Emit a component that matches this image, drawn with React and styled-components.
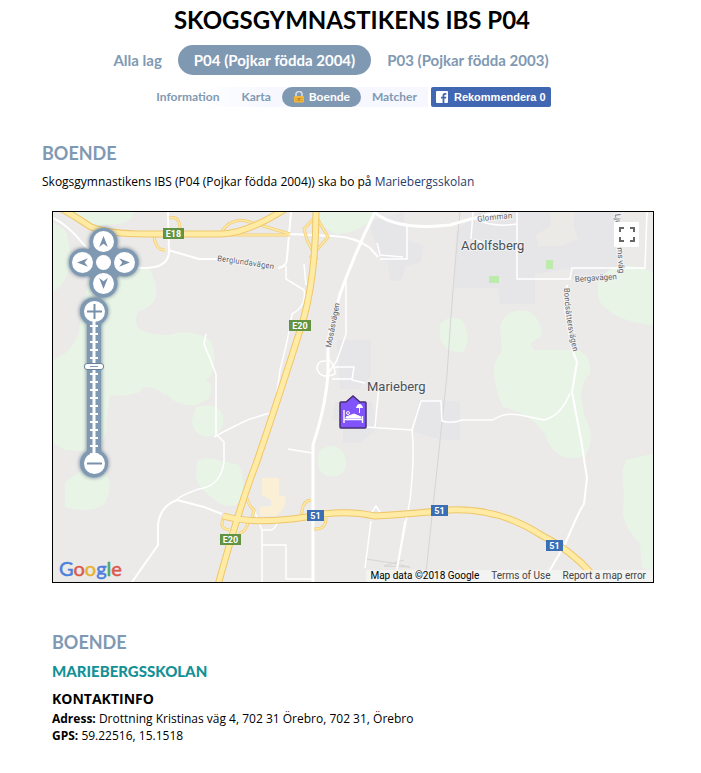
import React, { useState } from "react";
import styled, { createGlobalStyle } from "styled-components";

const slate = "#8099b3";

const GlobalStyle = createGlobalStyle`
  * { box-sizing: border-box; }
  body {
    margin: 0;
    background: #fff;
    color: #000;
    font-family: "Open Sans", sans-serif;
    font-size: 12px;
    line-height: 17px;
  }
`;

const Page = styled.main`
  padding: 4px 47px 24px 42px;
`;

const Title = styled.h1`
  margin: 0;
  padding-left: 8px;
  font: 700 24px/32px Lato, sans-serif;
  text-align: center;
  white-space: nowrap;
`;

const TeamNav = styled.nav`
  display: flex;
  justify-content: center;
  margin: 9px 34px 12px 0;
`;

const TeamTab = styled.a`
  padding: 0 16px;
  border-radius: 15px;
  background: ${(p) => (p.$active ? slate : "transparent")};
  color: ${(p) => (p.$active ? "#fff" : slate)};
  font: 700 15px/30px Lato, sans-serif;
  text-decoration: none;
  white-space: nowrap;
`;

const SubNav = styled.nav`
  display: flex;
  justify-content: center;
  margin-bottom: 35px;
`;

const SubItems = styled.div`
  display: flex;
  background: linear-gradient(90deg, #fff 20%, #f6f7ff 45%);
`;

const SubTab = styled.a`
  display: flex;
  align-items: center;
  gap: 4px;
  padding: 0 11px;
  border-radius: 10px;
  background: ${(p) => (p.$active ? slate : "transparent")};
  color: ${(p) => (p.$active ? "#fff" : slate)};
  font: 700 12px/20px Lato, sans-serif;
  text-decoration: none;
`;

const Recommend = styled.button`
  display: flex;
  align-items: center;
  gap: 6px;
  height: 20px;
  padding: 0 5px;
  margin-left: 3px;
  border: 0;
  border-radius: 2px;
  background: #4267b2;
  color: #fff;
  font: 700 11px/20px "Liberation Sans", sans-serif;
  white-space: nowrap;
`;

const Heading = styled.h2`
  margin: 0;
  color: ${slate};
  font: 700 18px/22px Lato, sans-serif;
`;

const Intro = styled.p`
  margin: 9px 0 21px;
`;

const TextLink = styled.a`
  color: #293c6b;
  text-decoration: none;
`;

const MapFrame = styled.section`
  position: relative;
  margin-left: 10px;
  border: 1px solid #000;
  overflow: hidden;
`;

const MapDrawing = styled.svg`
  display: block;
  width: 100%;
  height: auto;
  font-family: Roboto, sans-serif;
`;

const Controls = styled.div`
  position: absolute;
  top: 10px;
  left: 10px;
  width: 82px;
  display: flex;
  flex-direction: column;
`;

const ControlBacking = styled.svg`
  position: absolute;
  inset: 0;
`;

const PanPad = styled.div`
  position: relative;
  display: grid;
  grid-template-columns: repeat(3, 21px);
  grid-template-rows: repeat(3, 21px);
  margin: 9px 0 0 9px;
`;

const RoundButton = styled.button`
  display: flex;
  align-items: center;
  justify-content: center;
  grid-area: ${(p) => p.$area};
  place-self: center;
  width: ${(p) => p.$size || 21}px;
  height: ${(p) => p.$size || 21}px;
  padding: 0;
  border: 0;
  border-radius: 50%;
  background: #fff;
`;

const ZoomColumn = styled.div`
  position: relative;
  display: flex;
  flex-direction: column;
  align-items: center;
  width: 22px;
  margin: 7px 0 0 20px;
`;

const ZoomRange = styled.input`
  appearance: none;
  writing-mode: vertical-lr;
  direction: rtl;
  width: 20px;
  height: 131px;
  margin: 0;
  background: transparent;
  &::-webkit-slider-thumb {
    appearance: none;
    width: 20px;
    height: 7px;
    border: 1px solid #68819c;
    border-radius: 3px;
    background: linear-gradient(#fff 2px, ${slate} 2px, ${slate} 3px, #fff 3px) center / 8px 5px no-repeat #fff;
  }
`;

const FullscreenButton = styled.button`
  position: absolute;
  top: 10px;
  right: 14px;
  width: 25px;
  height: 25px;
  padding: 0;
  border: 0;
  border-radius: 1px;
  background: #fff;
`;

const GoogleLink = styled.a`
  position: absolute;
  left: 6px;
  bottom: 1px;
  font: 400 20px/26px Lato, sans-serif;
  text-decoration: none;
  -webkit-text-stroke: 0.5px currentColor;
`;

const Letter = styled.span`
  color: ${(p) => p.$color};
`;

const Credits = styled.footer`
  position: absolute;
  right: 0;
  bottom: 0;
  display: flex;
  gap: 12px;
  padding: 0 7px 0 4px;
  background: rgba(247, 247, 247, 0.7);
  color: #000;
  font: 400 10px/12px Roboto, sans-serif;
`;

const CreditLink = styled.a`
  color: #444;
  text-decoration: none;
`;

const Details = styled.section`
  padding: 48px 0 0 10px;
`;

const SchoolName = styled.h3`
  margin: 7px 0;
  color: #149196;
  font: 900 15px/22px Lato, sans-serif;
`;

const ContactHeading = styled.h4`
  margin: 0;
  font: 700 14px/20px "Open Sans", sans-serif;
  margin-bottom: 1px;
`;

const ContactLine = styled.p`
  margin: 0;
`;

function Lock() {
  return (
    <svg width="12" height="12" viewBox="0 0 12 12" aria-hidden="true">
      <path d="M3 6V3.5a3 2.7 0 0 1 6-.5v2" fill="none" stroke="#d9dde0" strokeWidth="1.6" />
      <rect x="1" y="5" width="10" height="6.5" rx="1" fill="#f3b83f" />
      <path d="M2 7.5h8M2 9.5h8" stroke="#dfa02c" />
      <path d="M6 7v2.5" stroke="#8c6418" />
    </svg>
  );
}

function FacebookMark() {
  return (
    <svg width="12" height="12" viewBox="0 0 12 12" aria-hidden="true">
      <rect width="12" height="12" rx="1" fill="#fff" />
      <path d="M6.6 12V7.5H5V5.8h1.6V4.5c0-1.6 1-2.4 2.4-2.4h1.3v1.6h-.9c-.8 0-1 .4-1 .9v1.2h1.9L10 7.5H8.4V12z" fill="#4267b2" />
    </svg>
  );
}

function Arrow({ turn }) {
  return (
    <svg width="13" height="13" viewBox="-6 -6 12 12" aria-hidden="true">
      <path d="M0-5L4 5L0 2L-4 5Z" fill="#7890aa" transform={`rotate(${turn})`} />
    </svg>
  );
}

function Sign({ plus }) {
  return (
    <svg width="15" height="15" viewBox="0 0 15 15" aria-hidden="true">
      <path d={plus ? "M0 7.5h15M7.5 0v15" : "M0 7.5h15"} stroke="#7890aa" strokeWidth="2" />
    </svg>
  );
}

const shields = [
  { x: 163, y: 228, w: 21, label: "E18", color: "#619342" },
  { x: 289, y: 320, w: 22, label: "E20", color: "#619342" },
  { x: 220, y: 534, w: 21, label: "E20", color: "#619342" },
  { x: 307, y: 510, w: 17, label: "51", color: "#3b6fb5" },
  { x: 431, y: 505, w: 17, label: "51", color: "#3b6fb5" },
  { x: 546, y: 540, w: 17, label: "51", color: "#3b6fb5" },
];

const woods = [
  "M53 292Q72 280 70 250L66 231L53 222Z",
  "M74 212H134Q131 222 119 224L96 226Z",
  "M53 360Q70 354 78 335Q84 302 88 282Q120 268 145 267Q157 274 156 297Q153 307 138 311Q133 326 141 330Q157 337 172 334Q193 329 211 341Q218 357 211 376Q198 386 178 382Q168 390 165 395Q145 380 140 392Q125 397 110 395L106 424Q110 440 90 452L65 450L53 443Z",
  "M164 392Q180 378 202 377Q216 384 209 398Q192 412 173 400Z",
  "M196 407Q218 401 223 416Q225 434 207 437Q192 434 192 420Z",
  "M197 461Q207 455 221 461L239 465Q248 486 238 504Q224 510 211 497Q195 485 196 474Z",
  "M65 482L82 470L105 471Q115 489 103 505Q88 514 65 507Z",
  "M319 451Q334 440 344 454Q350 471 337 476Q319 478 318 463Z",
  "M319 212H378Q366 231 337 234Q322 227 319 222Z",
  "M500 326Q506 308 528 311Q544 321 541 337Q525 343 534 350H576Q592 354 590 374Q575 385 586 420Q596 437 585 456Q555 465 545 434Q530 413 503 407Q494 388 494 367Q497 356 502 351Z",
  "M440 324Q451 314 461 320Q473 335 463 352Q446 354 440 338Z",
  "M598 284Q604 268 622 266Q640 264 653 273V325Q616 322 600 302Q597 294 598 284Z",
  "M626 460L653 454V570L642 568L640 544Q626 530 623 515L624 491Q620 476 626 460Z",
];

const minorRoads = [
  "M286 266V279L304 290Q307 306 292 314Q289 336 280 370L276 400",
  "M304 264L306 285M346 281V334L337 360L328 374",
  "M403 257L380 255L377 243M407 226V259H380",
  "M326 361Q317 360 317 369Q321 380 335 374Q336 367 327 357",
  "M334 367H354L352 380L365 383M332 379H352M350 426L412 430L421 401H441L442 421Q452 424 462 420Q483 420 493 420Q504 412 520 415L544 420Q561 416 570 393",
  "M379 386L375 427M412 430Q415 455 410 500L397 570",
  "M473 212L471 239M517 212V279H570L572 268H645L647 212",
  "M474 218Q491 228 517 224M474 239L490 246",
  "M288 449L312 453M206 334L204 344L216 374V436M214 437Q238 424 250 419L270 413",
  "M217 435L224 442V462Q221 486 199 489Q177 497 177 500",
  "M254 510L262 530H272Q278 526 278 518M262 530V582M262 545H286V579H312",
  "M371 521L365 568M405 521L397 568M372 512L376 506L381 514",
];

const ramps =
  "M169 218Q181 215 180 232M154 235Q155 250 165 250M222 231Q233 216 250 222L290 234M230 235H290M317 215L304 229L307 240L317 260M316 216L328 237L310 258M224 517Q218 528 229 530M248 520Q248 530 239 534M246 495Q248 505 254 510L252 518M302 516Q301 501 311 500M314 529Q326 530 326 518";

const highways = [
  "M62 209Q76 217 91 227Q110 234 145 234H221Q248 233 285 209",
  "M316 209Q316 275 303 321Q278 400 256 464Q240 505 218 585",
  "M223 516Q255 525 306 517Q343 509 375 516Q410 514 450 510Q500 508 541 535Q571 550 592 574",
];

function MapPicture() {
  return (
    <MapDrawing viewBox="53 212 600 370" role="img" aria-label="Map of Marieberg and Adolfsberg">
      <defs>
        <path id="berglund" d="M217 261Q242 264 278 270" />
        <path id="glomman" d="M478 222Q495 219 516 218" />
        <path id="bondsatter" d="M564 288Q565 320 574 354" />
      </defs>
      <rect x="53" y="212" width="600" height="370" fill="#ebeae8" />
      <g fill="#e6e6e9">
        <path d="M369 222L403 212L407 240L423 246L421 262L406 266L401 281H390L388 262L378 253Z" />
        <path d="M456 231L480 212H617V278H570V268L535 274V304H500L498 288H454Z" />
        <path d="M337 340H371V376L358 389H340ZM335 402H371L378 428L360 443H343V421L332 420ZM419 400L460 401V440H442L414 432Z" />
      </g>
      <g fill="#ebeae6">
        <path d="M536 235L551 226L550 212H574V226L578 239L561 246H538Z" />
        <path d="M382 400L400 403L398 414H385Z" />
      </g>
      <g fill="#e8f5e6">
        {woods.map((d) => <path key={d} d={d} />)}
      </g>
      <g fill="#bcebab">
        <rect x="546" y="260" width="7" height="9" />
        <rect x="489" y="276" width="10" height="7" />
      </g>
      <path d="M262 478H279V495L286 497L284 507L277 516H260V507L271 506V500L262 495Z" fill="#fbf0d6" />
      <g fill="none" stroke="#d5d5d5">
        <path d="M460 212Q453 280 447 375L425 582" />
        <path d="M366 559L392 563L410 567L384 566L404 560" />
      </g>
      <g fill="none" stroke="#fff" strokeWidth="1.5" strokeLinejoin="round">
        {minorRoads.map((d) => <path key={d} d={d} />)}
      </g>
      <g fill="none" stroke="#fff" strokeWidth="2" strokeLinejoin="round">
        <path d="M53 218Q68 225 84 245L104 261L141 268Q168 269 169 252L168 212M168 250L199 259H218" />
        <path d="M278 268Q287 267 287 258L291 212M290 234L333 236Q356 237 370 248L378 257" />
        <path d="M567 285L565 310L572 349L577 362L572 392L582 445Q585 466 587 478L584 504Q580 510 576 519L564 546L543 582" />
        <path d="M132 582L158 545V525Q160 506 177 500L204 507L222 514" />
      </g>
      <g fill="none" stroke="#fff" strokeWidth="3" strokeLinejoin="round">
        <path d="M375 212Q356 250 340 294L328 340V370Q327 402 313 445V582" />
        <path d="M374 212Q397 231 450 225Q476 217 500 212" />
      </g>
      <path d={ramps} fill="none" stroke="#f2ce78" strokeWidth="3" />
      <path d={ramps} fill="none" stroke="#ffe9a4" strokeWidth="1.5" />
      <g fill="none" stroke="#efc66a" strokeWidth="7">
        {highways.map((d) => <path key={d} d={d} />)}
      </g>
      <g fill="none" stroke="#ffeba4" strokeWidth="5">
        {highways.map((d) => <path key={d} d={d} />)}
      </g>
      {shields.map((s) => (
        <g key={s.x}>
          <rect x={s.x} y={s.y} width={s.w} height="11" fill={s.color} />
          <text x={s.x + s.w / 2} y={s.y + 9} textAnchor="middle" fill="#fff" fontSize="9" fontWeight="700">{s.label}</text>
        </g>
      ))}
      <g fill="#5d6064" fontSize="8" stroke="#f3f3f3" strokeWidth="2" paintOrder="stroke">
        <text><textPath href="#berglund">Berglundavägen</textPath></text>
        <text><textPath href="#glomman">Glomman</textPath></text>
        <text><textPath href="#bondsatter">Bondsättersvägen</textPath></text>
        <text transform="translate(331 348) rotate(-79)">Mosåsvägen</text>
        <text transform="translate(575 282) rotate(-4)">Bergavägen</text>
        <text transform="translate(615 214) rotate(86)">Ljungströms väg</text>
      </g>
      <g fill="#4b5159" fontSize="13" stroke="#f1f1f1" strokeWidth="2" paintOrder="stroke">
        <text x="461" y="250">Adolfsberg</text>
        <text x="367" y="391">Marieberg</text>
      </g>
      <path d="M341 402H346L353 396L360 402H365Q366 402 366 403V427Q366 428 365 428H341Q340 428 340 427V403Q340 402 341 402Z" fill="#8053fb" stroke="#463071" strokeWidth="1.5" />
      <g fill="none" stroke="#fff">
        <path d="M344 410V423M344 419.5H362M362.5 416V423" strokeWidth="1.4" />
        <path d="M346 417L354 414L361 417V418H346Z" fill="#fff" />
        <circle cx="348" cy="413" r="1.5" />
        <path d="M359.5 406V413" />
        <path d="M356 408Q357 404 359.5 404Q362 404 363 408Z" fill="#fff" stroke="none" />
      </g>
    </MapDrawing>
  );
}

const ticks = Array.from({ length: 17 }, (_, i) => 104 + i * 8);

function MapControls() {
  const [zoom, setZoom] = useState(67);
  return (
    <Controls>
      <ControlBacking width="82" height="262" viewBox="0 0 82 262" aria-hidden="true">
        <g fill={slate} filter="drop-shadow(0 0 2px #60758f)">
          <circle cx="40.5" cy="20" r="14" />
          <circle cx="20" cy="40.5" r="14" />
          <circle cx="61.5" cy="40.5" r="14" />
          <circle cx="40.5" cy="61.5" r="14" />
          <rect x="26" y="26" width="29" height="29" />
          <circle cx="31" cy="89.5" r="14" />
          <rect x="24" y="95" width="14" height="140" />
          <circle cx="31" cy="241.5" r="14" />
        </g>
        <path d="M31 98V232" stroke="#fff" strokeWidth="3" />
        {ticks.map((y) => <path key={y} d={`M27 ${y}h8`} stroke="#fff" strokeWidth="2" />)}
      </ControlBacking>
      <PanPad>
        <RoundButton $area="1 / 2" aria-label="Pan up"><Arrow turn={0} /></RoundButton>
        <RoundButton $area="2 / 1" aria-label="Pan left"><Arrow turn={-90} /></RoundButton>
        <RoundButton $area="2 / 2" $size={15} aria-label="Center map" />
        <RoundButton $area="2 / 3" aria-label="Pan right"><Arrow turn={90} /></RoundButton>
        <RoundButton $area="3 / 2" aria-label="Pan down"><Arrow turn={180} /></RoundButton>
      </PanPad>
      <ZoomColumn>
        <RoundButton $area="auto" aria-label="Zoom in" onClick={() => setZoom(Math.min(100, zoom + 6))}><Sign plus /></RoundButton>
        <ZoomRange type="range" min="0" max="100" aria-label="Zoom" value={zoom} onChange={(e) => setZoom(Number(e.target.value))} />
        <RoundButton $area="auto" aria-label="Zoom out" onClick={() => setZoom(Math.max(0, zoom - 6))}><Sign /></RoundButton>
      </ZoomColumn>
    </Controls>
  );
}

export default function App() {
  return (
    <>
      <GlobalStyle />
      <Page>
        <Title>SKOGSGYMNASTIKENS IBS P04</Title>
        <TeamNav>
          <TeamTab href="#alla">Alla lag</TeamTab>
          <TeamTab href="#p04" $active>P04 (Pojkar födda 2004)</TeamTab>
          <TeamTab href="#p03">P03 (Pojkar födda 2003)</TeamTab>
        </TeamNav>
        <SubNav>
          <SubItems>
            <SubTab href="#information">Information</SubTab>
            <SubTab href="#karta">Karta</SubTab>
            <SubTab href="#boende" $active><Lock />Boende</SubTab>
            <SubTab href="#matcher">Matcher</SubTab>
          </SubItems>
          <Recommend><FacebookMark />Rekommendera 0</Recommend>
        </SubNav>
        <Heading>BOENDE</Heading>
        <Intro>
          Skogsgymnastikens IBS (P04 (Pojkar födda 2004)) ska bo på <TextLink href="#mariebergsskolan">Mariebergsskolan</TextLink>
        </Intro>
        <MapFrame>
          <MapPicture />
          <MapControls />
          <FullscreenButton aria-label="Toggle fullscreen view">
            <svg width="25" height="25" viewBox="0 0 25 25" aria-hidden="true">
              <path d="M6 10V6h4M16 6h4v4M20 15v4h-4M10 19H6v-4" fill="none" stroke="#666" strokeWidth="2" />
            </svg>
          </FullscreenButton>
          <GoogleLink href="#google-maps" aria-label="Google">
            <Letter $color="#4d7fdc">G</Letter>
            <Letter $color="#dc584c">o</Letter>
            <Letter $color="#e5b32d">o</Letter>
            <Letter $color="#4d7fdc">g</Letter>
            <Letter $color="#46a565">l</Letter>
            <Letter $color="#dc584c">e</Letter>
          </GoogleLink>
          <Credits>
            <span>Map data ©2018 Google</span>
            <CreditLink href="#terms">Terms of Use</CreditLink>
            <CreditLink href="#report">Report a map error</CreditLink>
          </Credits>
        </MapFrame>
        <Details id="mariebergsskolan">
          <Heading>BOENDE</Heading>
          <SchoolName>MARIEBERGSSKOLAN</SchoolName>
          <ContactHeading>KONTAKTINFO</ContactHeading>
          <ContactLine><b>Adress:</b> Drottning Kristinas väg 4, 702 31 Örebro, 702 31, Örebro</ContactLine>
          <ContactLine><b>GPS:</b> 59.22516, 15.1518</ContactLine>
        </Details>
      </Page>
    </>
  );
}
